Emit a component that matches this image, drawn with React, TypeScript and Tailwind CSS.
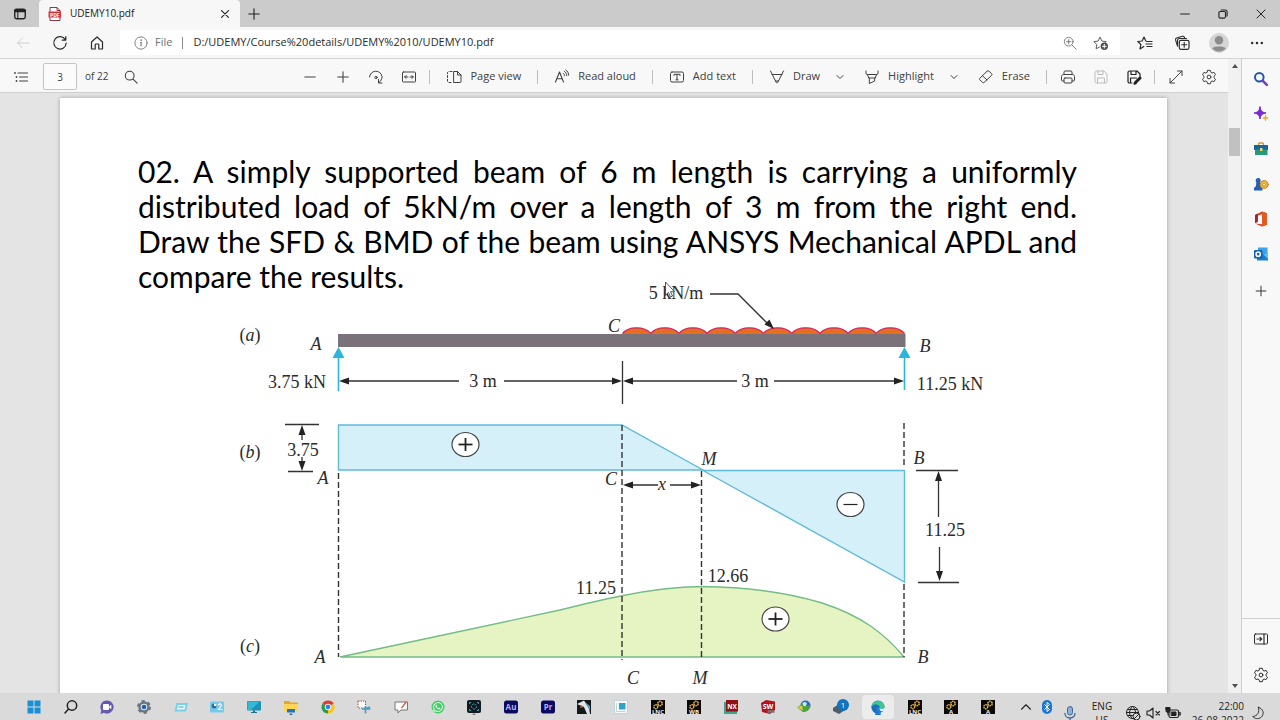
import React from 'react';
import { FaWhatsapp } from 'react-icons/fa';

interface IconProps {
  className?: string;
  children: React.ReactNode;
}

const Icon: React.FC<IconProps> = ({ className = 'size-4', children }) => (
  <svg
    viewBox="0 0 16 16"
    fill="none"
    stroke="currentColor"
    strokeLinecap="round"
    strokeLinejoin="round"
    className={`shrink-0 ${className}`}
    aria-hidden="true"
  >
    {children}
  </svg>
);

const GearIcon = () => (
  <Icon>
    <path d="M6.6 1.3h2.8l.5 2 1.2.7 2-.6 1.4 2.4-1.5 1.4v1.6l1.5 1.4-1.4 2.4-2-.6-1.2.7-.5 2H6.6l-.5-2-1.2-.7-2 .6-1.4-2.4L3 8.8V7.2L1.500 5.800l1.400-2.400 2 .6 1.200-.7z" />
    <circle cx="8" cy="8" r="1.9" />
  </Icon>
);

const ChevronDown = () => (
  <Icon className="size-2">
    <path d="M2 5l6 6 6-6" strokeWidth="2" />
  </Icon>
);

interface IconButtonProps {
  label: string;
  className?: string;
  children: React.ReactNode;
}

const IconButton: React.FC<IconButtonProps> = ({ label, className = 'w-[33px]', children }) => (
  <button type="button" aria-label={label} className={`flex h-full shrink-0 items-center justify-center ${className}`}>
    {children}
  </button>
);

const ToolButton: React.FC<{ label: string; icon: React.ReactNode; menu?: boolean }> = ({ label, icon, menu }) => (
  <button type="button" className={`flex h-full shrink-0 items-center gap-2 pl-3 ${menu ? 'pr-2' : 'pr-3'}`}>
    {icon}
    <span>{label}</span>
    {menu && (
      <span className="pl-2">
        <ChevronDown />
      </span>
    )}
  </button>
);

const Separator = () => <span className="mx-1 h-3.5 w-px shrink-0 bg-[#bdbdbd]" />;

const TabStrip = () => (
  <div className="flex h-[27px] shrink-0 bg-[#cbcbcb] text-[#222]">
    <IconButton label="Tab actions" className="w-[39px]">
      <Icon className="size-3.5">
        <rect x="2" y="2.5" width="12" height="11" rx="2" strokeWidth="1.6" />
        <path d="M2.5 4.5h11" strokeWidth="3" />
        <path d="M5.5 4v9" strokeWidth="1.2" />
      </Icon>
    </IconButton>
    <div className="flex w-[201px] items-center rounded-t bg-[#f7f7f7] pl-2">
      <svg viewBox="0 0 16 16" className="size-4 shrink-0" aria-hidden="true">
        <path d="M3 1.5h7l3 3V14.5H3z" fill="#fff" stroke="#8d3a44" />
        <path d="M10 1.5v3h3" fill="none" stroke="#8d3a44" />
        <rect x="1.5" y="5.5" width="12.5" height="6" fill="#d8303f" />
        <text x="7.8" y="10.5" fontSize="5" fontWeight="700" textAnchor="middle" fill="#fff">PDF</text>
      </svg>
      <span className="flex-1 pl-[7px] text-[10px]">UDEMY10.pdf</span>
      <button type="button" aria-label="Close tab" className="flex w-[30px] items-center justify-center">
        <Icon className="size-2.5">
          <path d="M2.5 2.5l11 11m0-11l-11 11" strokeWidth="1.8" />
        </Icon>
      </button>
    </div>
    <IconButton label="New tab" className="w-[28px]">
      <Icon className="size-3">
        <path d="M8 1v14M1 8h14" strokeWidth="1.5" />
      </Icon>
    </IconButton>
    <div className="ml-auto flex">
      <IconButton label="Minimise" className="w-[38px]">
        <Icon className="size-2.5">
          <path d="M1 8h14" strokeWidth="1.6" />
        </Icon>
      </IconButton>
      <IconButton label="Restore" className="w-[38px]">
        <Icon className="size-2.5">
          <rect x="1.5" y="4" width="10.5" height="10.5" rx="2" strokeWidth="1.8" />
          <path d="M5 1.5h6.5a3 3 0 013 3V11" strokeWidth="1.8" />
        </Icon>
      </IconButton>
      <IconButton label="Close" className="w-[38px]">
        <Icon className="size-2.5">
          <path d="M1.5 1.5l13 13m0-13l-13 13" strokeWidth="1.6" />
        </Icon>
      </IconButton>
    </div>
  </div>
);

const AddressBar = () => (
  <div className="flex h-8 shrink-0 items-center border-b border-[#d4d4d4] bg-[#f7f7f7] pl-1 text-[#2b2b2b]">
    <IconButton label="Back" className="w-[37px] text-[#cfcfcf]">
      <Icon>
        <path d="M14 8H2.500m5-5l-5 5 5 5" />
      </Icon>
    </IconButton>
    <IconButton label="Refresh" className="w-[37px]">
      <Icon>
        <path d="M13.300 4.600A6.200 6.200 0 1014.200 8M13.800 1.500v3.600h-3.600" strokeWidth="1.2" />
      </Icon>
    </IconButton>
    <IconButton label="Home" className="w-[37px]">
      <Icon>
        <path d="M2.500 7L8 2l5.500 5v7h-3.700V9.800c0-.5-.3-.8-.8-.8H7c-.5 0-.8.300-.8.800V14H2.500z" strokeWidth="1.2" />
      </Icon>
    </IconButton>
    <div className="ml-[5px] flex h-[25px] min-w-0 flex-1 items-center bg-white pr-1 pl-3.5 text-[11px]">
      <Icon className="size-3.5 text-[#707070]">
        <circle cx="8" cy="8" r="7" />
        <path d="M8 7.200v4" strokeWidth="1.3" />
        <circle cx="8" cy="4.700" r=".4" />
      </Icon>
      <span className="pl-[7px] text-[#707070]">File</span>
      <span className="mx-2.5 h-3 w-px bg-[#8a8a8a]" />
      <input
        aria-label="Address"
        defaultValue="D:/UDEMY/Course%20details/UDEMY%2010/UDEMY10.pdf"
        className="min-w-0 flex-1 bg-transparent text-[#2b2b2b] outline-none"
      />
      <button type="button" aria-label="Zoom" className="flex w-[31px] justify-center text-[#707070]">
        <Icon className="size-3.5">
          <circle cx="6.5" cy="6.5" r="5" />
          <path d="M10.300 10.300L15 15M6.500 4v5M4 6.500h5" />
        </Icon>
      </button>
      <button type="button" aria-label="Add to favourites" className="flex w-[31px] justify-center text-[#606060]">
        <Icon>
          <path d="M6.500 12l-3.400 1.900.8-4.300L.8 6.600l4.300-.5L7 2l1.900 4.100 4.300.500-1 1" />
          <circle cx="11.300" cy="11.300" r="3.700" fill="#505050" stroke="none" />
          <path d="M11.300 9.500v3.600m-1.800-1.800h3.600" stroke="#fff" />
        </Icon>
      </button>
    </div>
    <div className="flex h-full pr-[3px] pl-1.5">
      <IconButton label="Favourites" className="w-[37px]">
        <Icon>
          <path d="M6.800 11.500L3 13.900l.900-4.400L.8 6.500l4.300-.5L7 2l1.700 3.800M9.500 6.500H15M9 9h6M10 11.500h5" strokeWidth="1.2" />
        </Icon>
      </IconButton>
      <IconButton label="Collections" className="w-[37px]">
        <Icon>
          <rect x="5.300" y="5.300" width="9.700" height="9" rx="1.5" strokeWidth="1.2" />
          <path d="M10.200 7.300v5M7.700 9.800h5M3.500 11.200L1.600 5.200c-.3-1 .1-1.800 1-2.100l5.700-1.800c1-.3 1.700.1 2.100 1l.3.900M3.500 10.500V5.500c0-1.300.7-2 2-2h7" strokeWidth="1.1" />
        </Icon>
      </IconButton>
      <IconButton label="Profile" className="w-[37px]">
        <svg viewBox="0 0 20 20" className="size-5" aria-hidden="true">
          <circle cx="10" cy="10" r="10" fill="#d5d5d5" />
          <circle cx="10" cy="7.300" r="4.200" fill="#8c8c8c" />
          <path d="M3.300 15.300C4.500 12.800 15.500 12.800 16.700 15.300A8.500 8.500 0 013.300 15.300z" fill="#8c8c8c" />
        </svg>
      </IconButton>
      <IconButton label="Settings and more" className="w-[40px]">
        <Icon className="size-3.5">
          <g fill="currentColor" stroke="none">
            <circle cx="2.5" cy="8" r="1.4" />
            <circle cx="8" cy="8" r="1.4" />
            <circle cx="13.5" cy="8" r="1.4" />
          </g>
        </Icon>
      </IconButton>
    </div>
  </div>
);

const PdfToolbar = () => (
  <div className="flex h-[34px] shrink-0 items-center border-b border-[#cfcfcf] bg-[#f8f8f8] pt-0.5 text-[11px] text-[#404040]">
    <div className="mr-auto flex h-full items-center pl-1">
      <IconButton label="Contents">
        <Icon>
          <path d="M5 4h9.500M6.500 8h8M6.500 12h8" strokeWidth="1.2" />
          <g fill="currentColor" stroke="none">
            <circle cx="2" cy="4" r=".9" />
            <circle cx="3.500" cy="8" r=".9" />
            <circle cx="3.500" cy="12" r=".9" />
          </g>
        </Icon>
      </IconButton>
      <input
        aria-label="Page number"
        defaultValue="3"
        className="ml-1.5 h-[27px] w-[34px] rounded-xs border border-[#c4c4c4] bg-[#fbfbfb] text-center text-[10px] outline-none"
      />
      <span className="w-[29px] pl-2 text-[10px] whitespace-nowrap">of 22</span>
      <IconButton label="Find" className="ml-2 w-[33px]">
        <Icon className="size-3.5">
          <circle cx="6.5" cy="6.5" r="5" strokeWidth="1.2" />
          <path d="M10.300 10.300L15 15" strokeWidth="1.2" />
        </Icon>
      </IconButton>
    </div>
    <div className="flex h-full items-center">
      <IconButton label="Zoom out">
        <Icon className="size-3.5">
          <path d="M2 8h12" strokeWidth="1.2" />
        </Icon>
      </IconButton>
      <IconButton label="Zoom in">
        <Icon className="size-3.5">
          <path d="M8 2v12M2 8h12" strokeWidth="1.2" />
        </Icon>
      </IconButton>
      <IconButton label="Rotate">
        <Icon>
          <path d="M1.500 8A6.300 6.300 0 0114 7.500c0 2.600-1 4.500-3 6M10.500 10.500v3.500h3.500" />
          <circle cx="8" cy="8.500" r="1.200" />
        </Icon>
      </IconButton>
      <IconButton label="Fit to width">
        <Icon>
          <rect x="1.500" y="3" width="13" height="10" rx="1" />
          <path d="M7 8H3.700m1.500-1.500L3.700 8l1.500 1.500M9 8h3.300m-1.500-1.500L12.300 8l-1.500 1.500" />
        </Icon>
      </IconButton>
      <Separator />
      <ToolButton
        label="Page view"
        icon={
          <Icon>
            <path d="M8 2.500h3.500L15 6v6.500c0 .6-.4 1-1 1H8zM11.500 2.500V6H15" />
            <path d="M6 2.500H3c-1 0-1.500.5-1.500 1.500v8c0 1 .5 1.500 1.500 1.500h3" strokeDasharray="2 1.8" />
          </Icon>
        }
      />
      <Separator />
      <ToolButton
        label="Read aloud"
        icon={
          <Icon>
            <path d="M1.500 13L5.500 3l4 10M3 9.800h5" strokeWidth="1.1" />
            <path d="M9.500 4.500c.8.500 1.200 1.300 1.200 2.300M10.500 2.500c1.500.9 2.300 2.300 2.300 4M11.800 1c1.900 1.200 2.900 3 2.900 5.200" />
          </Icon>
        }
      />
      <Separator />
      <ToolButton
        label="Add text"
        icon={
          <Icon>
            <rect x="1.500" y="3" width="13" height="10" rx="1.500" />
            <path d="M5 6.500V5.300h6v1.200M8 5.300v5.500M7 10.800h2" />
          </Icon>
        }
      />
      <Separator />
      <ToolButton
        menu
        label="Draw"
        icon={
          <Icon>
            <path d="M1.500 2l5.800 11.500c.3.500 1.100.5 1.400 0L14.500 2M3 5.500h10M6.500 12h3" />
          </Icon>
        }
      />
      <ToolButton
        menu
        label="Highlight"
        icon={
          <Icon>
            <path d="M2 2v2.500c0 .5.400 1 1 1h10c.6 0 1-.5 1-1V2M3.500 5.500l1.200 3.500h6.600l1.200-3.500M5.300 9v5.500l5.400-2.500V9" />
          </Icon>
        }
      />
      <ToolButton
        label="Erase"
        icon={
          <Icon>
            <path d="M9 2.300L1.800 9.200c-.5.500-.5 1.100 0 1.600L4.500 13.500c.4.400 1 .4 1.500 0L13.700 6.300c.5-.5.5-1.100 0-1.600L11 2.200c-.6-.5-1.400-.5-2 .1zM4.500 6.800l4.500 4.200" />
          </Icon>
        }
      />
    </div>
    <div className="flex h-full items-center pr-[3px]">
      <Separator />
      <IconButton label="Print">
        <Icon>
          <path d="M4 5.500V3c0-.5.400-1 1-1h6c.6 0 1 .500 1 1v2.500M4 12H2.500c-.6 0-1-.4-1-1V7.500c0-1 .8-2 2-2h9c1.200 0 2 1 2 2V11c0 .6-.4 1-1 1H12" />
          <rect x="4" y="9" width="8" height="5" rx="1" />
        </Icon>
      </IconButton>
      <IconButton label="Save" className="w-[33px] text-[#bdbdbd]">
        <Icon>
          <path d="M2 3.500C2 2.700 2.700 2 3.500 2H11l3 3v7.500c0 .8-.7 1.500-1.500 1.500h-9C2.700 14 2 13.300 2 12.500zM5 2v3.500h5V2M4.500 14V9h7v5" />
        </Icon>
      </IconButton>
      <IconButton label="Save as" className="w-[33px] text-[#202020]">
        <Icon>
          <path d="M6 14H3.500C2.700 14 2 13.300 2 12.500v-9C2 2.700 2.700 2 3.500 2H11l3 3v2.500M5 2v3.500h5V2M4.500 14V9h6" strokeWidth="1.2" />
          <path d="M9.500 13.500l4.500-4.500" strokeWidth="3" />
          <path d="M8 15l.5-2 1.500 1.500z" fill="currentColor" />
        </Icon>
      </IconButton>
      <Separator />
      <IconButton label="Full screen">
        <Icon>
          <path d="M2 14L14 2M9.500 2H14v4.500M2 9.500V14h4.500" />
        </Icon>
      </IconButton>
      <IconButton label="Settings">
        <GearIcon />
      </IconButton>
    </div>
  </div>
);

/* points to the right with its tip on the origin */
const Head: React.FC<{ x: number; y: number; angle?: number; fill?: string }> = ({ x, y, angle = 0, fill = '#222' }) => (
  <path d="M0 0L-10 -3.500V3.500z" transform={`translate(${x} ${y}) rotate(${angle})`} fill={fill} />
);

const Sign: React.FC<{ x: number; y: number; minus?: boolean }> = ({ x, y, minus }) => (
  <g stroke="#222" fill="none">
    <ellipse cx={x} cy={y} rx="13.5" ry="12" fill="#fff" stroke="#444" strokeWidth="1.2" />
    <path d={`M${x - 7} ${y}h14`} strokeWidth={minus ? 1.2 : 1.8} />
    {!minus && <path d={`M${x} ${y - 6.5}v13`} strokeWidth="1.8" />}
  </g>
);

interface DiagramLabel {
  x: number;
  y: number;
  text: string;
  italic?: boolean;
}

const parts: DiagramLabel[] = [
  { x: 250, y: 341, text: 'a' },
  { x: 250, y: 458, text: 'b' },
  { x: 250, y: 652, text: 'c' },
];

const labels: DiagramLabel[] = [
  { x: 316, y: 350, text: 'A', italic: true },
  { x: 614, y: 332, text: 'C', italic: true },
  { x: 925, y: 352, text: 'B', italic: true },
  { x: 323, y: 484, text: 'A', italic: true },
  { x: 611, y: 485, text: 'C', italic: true },
  { x: 709, y: 465, text: 'M', italic: true },
  { x: 919, y: 464, text: 'B', italic: true },
  { x: 662, y: 490, text: 'x', italic: true },
  { x: 320, y: 663, text: 'A', italic: true },
  { x: 633, y: 684, text: 'C', italic: true },
  { x: 700, y: 684, text: 'M', italic: true },
  { x: 923, y: 663, text: 'B', italic: true },
  { x: 676, y: 299, text: '5 kN/m' },
  { x: 297, y: 388, text: '3.75 kN' },
  { x: 483, y: 387, text: '3 m' },
  { x: 755, y: 387, text: '3 m' },
  { x: 950, y: 390, text: '11.25 kN' },
  { x: 303, y: 456, text: '3.75' },
  { x: 945, y: 536, text: '11.25' },
  { x: 596, y: 594, text: '11.25' },
  { x: 728, y: 582, text: '12.66' },
];

const lobes = Array.from({ length: 10 }, (_, i) => 622.5 + i * 28.2);

const BeamDiagram = () => (
  <svg
    viewBox="60 282 1107 420"
    className="-mt-3 block w-full font-['Liberation_Serif',serif]"
    role="img"
    aria-label="Beam loading, shear force and bending moment diagrams"
  >
    {/* bending moment */}
    <path
      d="M340 657L560 610Q600 600 622 595.700Q665 587 702 586.500C745 587 785 592 822 603C862 616 885 634 904 657z"
      fill="#e6f4c3"
      stroke="#74bb86"
      strokeWidth="1.4"
    />
    {/* shear force */}
    <g fill="#d5f0f9" stroke="#5fbbd8" strokeWidth="1.4">
      <path d="M338.500 425H622L703 470H338.500z" />
      <path d="M703 470.500H904.500V582z" />
    </g>
    {/* beam and distributed load */}
    {lobes.map((x) => (
      <g key={x}>
        <path d={`M${x} 335V333C${x + 6} 326 ${x + 22} 326 ${x + 28.2} 333V335z`} fill="#e4701f" />
        <path d={`M${x} 333.500C${x + 6} 326 ${x + 22} 326 ${x + 28.2} 333.500`} fill="none" stroke="#d42a68" strokeWidth="1.4" />
      </g>
    ))}
    <rect x="338" y="334" width="567.500" height="13" fill="#7a717a" />
    <g stroke="#29b5dc" strokeWidth="1.6">
      <path d="M338.500 355V391M904.500 355V390" />
      <path d="M338.500 347l-6 11h12zM904.500 347l-6 11h12z" fill="#29b5dc" stroke="none" />
    </g>
    <g stroke="#333" strokeWidth="1.3" fill="none">
      <path d="M342 381H459M504 381H619M626 381H737M774 381H901" />
      <path d="M622.500 361V404" />
      <path d="M710 294H738L770 326" />
      <path d="M285 424.500H319M288 471.500H313M302 428V440M302 457V468" />
      <path d="M916 470.500H958M918 582.500H959M938.500 474V517M939.500 547V578" />
      <path d="M626 485H658M670 485H698" />
    </g>
    <g stroke="#333" strokeWidth="1.4" strokeDasharray="6 3">
      <path d="M338.500 473V657M622 425V660M701.500 471V658M904 423V468M904 584V657" />
    </g>
    <Head x={339} y={381} angle={180} />
    <Head x={622} y={381} />
    <Head x={623} y={381} angle={180} />
    <Head x={904} y={381} />
    <Head x={774} y={329} angle={45} />
    <Head x={302} y={425} angle={-90} />
    <Head x={302} y={471} angle={90} />
    <Head x={938.5} y={471} angle={-90} />
    <Head x={939.5} y={581} angle={90} />
    <Head x={623} y={485} angle={180} />
    <Head x={701} y={485} />
    <Sign x={465.5} y={444.5} />
    <Sign x={850.5} y={504.5} minus />
    <Sign x={775.5} y={619} />
    {parts.map(({ x, y, text }) => (
      <text key={text} x={x} y={y} textAnchor="middle" fontSize="18" fill="#2b2b2b">
        (<tspan fontStyle="italic">{text}</tspan>)
      </text>
    ))}
    {labels.map(({ x, y, text, italic }) => (
      <text key={`${x}-${y}`} x={x} y={y} textAnchor="middle" fontSize="18" fontStyle={italic ? 'italic' : 'normal'} fill="#2b2b2b">
        {text}
      </text>
    ))}
    <path d="M665.500 282v13l3-2.500 2 4.500 2-1-2-4.300h4z" fill="#fff" stroke="#444" strokeWidth=".9" />
  </svg>
);

const Scrollbar = () => (
  <div className="flex w-[13px] shrink-0 flex-col items-center bg-[#f1f1f1] py-1" aria-hidden="true">
    <svg viewBox="0 0 8 6" className="h-1.5 w-2">
      <path d="M4 1l3 4H1z" fill="#505050" />
    </svg>
    <div className="mt-[59px] h-7 w-[11px] bg-[#c1c1c1]" />
    <svg viewBox="0 0 8 6" className="mt-auto h-1.5 w-2">
      <path d="M4 5l3-4H1z" fill="#505050" />
    </svg>
  </div>
);

const Sidebar = () => (
  <aside className="flex w-[39px] shrink-0 flex-col border-l border-[#cfcfcf] bg-[#f8f8f8] pt-0.5 text-[#303030]">
    <button type="button" aria-label="Search" className="flex h-[35px] items-center justify-center">
      <Icon>
        <circle cx="6.300" cy="6.300" r="4.300" stroke="#2457b5" strokeWidth="2" />
        <path d="M9.800 9.800l4 4" stroke="#6b3fc0" strokeWidth="2.6" />
      </Icon>
    </button>
    <button type="button" aria-label="Discover" className="flex h-[35px] items-center justify-center">
      <Icon>
        <path d="M7 1c.8 4 2 5.200 6 6-4 .8-5.200 2-6 6-.8-4-2-5.200-6-6 4-.8 5.200-2 6-6z" fill="#7a2bd6" stroke="#6a25c8" />
        <path d="M12.500 9.500c.3 1.800.8 2.300 2.600 2.600-1.800.3-2.300.8-2.600 2.600-.3-1.800-.8-2.300-2.600-2.600 1.800-.3 2.300-.8 2.600-2.600z" fill="#e0b62c" stroke="#e0b62c" />
      </Icon>
    </button>
    <button type="button" aria-label="Tools" className="flex h-[35px] items-center justify-center">
      <Icon>
        <path d="M5.500 4V3c0-.6.400-1 1-1h3c.6 0 1 .4 1 1v1" stroke="#c89b2b" strokeWidth="1.3" />
        <path d="M1 4h14v5H1z" fill="#17649f" stroke="none" />
        <path d="M2 8.500h12.500V14H2z" fill="#28977a" stroke="none" />
        <rect x="7" y="7" width="2.500" height="3" fill="#eed66b" stroke="none" />
      </Icon>
    </button>
    <button type="button" aria-label="Games" className="flex h-[35px] items-center justify-center">
      <Icon>
        <path d="M5 2a2.500 2.500 0 012 4.200L7.500 10l2 2v2.500H1V12l2-2 .3-3.800A2.500 2.500 0 015 2z" fill="#235fb4" stroke="none" />
        <circle cx="11.200" cy="8.500" r="4" fill="#e9b645" stroke="#c98b22" />
        <path d="M9.700 8.500l1.500-1.500 1.500 1.500-1.500 1.500z" fill="#fff2b8" stroke="#b87918" strokeWidth=".6" />
      </Icon>
    </button>
    <button type="button" aria-label="Office" className="flex h-[35px] items-center justify-center">
      <Icon>
        <path d="M2 4l7-3.500 5 1.700v11.600l-5 1.700-7-3 7 .8V3.300L4.800 4.600v6.200L2 12z" fill="#d3401f" stroke="none" />
        <path d="M9 .5l5 1.700v11.600l-5 1.700z" fill="#e25a20" stroke="none" />
        <path d="M2 4l2.800-1.400v8.200L2 12z" fill="#a91f35" stroke="none" />
      </Icon>
    </button>
    <button type="button" aria-label="Outlook" className="flex h-[35px] items-center justify-center">
      <Icon>
        <rect x="5" y="1.500" width="9.500" height="9" fill="#3aa5e2" stroke="none" />
        <path d="M4 8l11-1v7.500H4z" fill="#1c7fcd" stroke="none" />
        <path d="M10 8l5 5V7z" fill="#59c4f0" stroke="none" />
        <rect x="1" y="4" width="8.500" height="8.500" rx="1" fill="#0f64b5" stroke="none" />
        <circle cx="5.200" cy="8.200" r="2.100" stroke="#fff" strokeWidth="1.5" />
      </Icon>
    </button>
    <button type="button" aria-label="Add" className="flex h-10 items-center justify-center">
      <Icon className="size-3">
        <path d="M8 1.500v13M1.500 8h13" strokeWidth="1.3" />
      </Icon>
    </button>
    <div className="mt-auto flex flex-col border-t border-[#cfcfcf] pt-0.5">
      <button type="button" aria-label="Hide sidebar" className="flex h-9 items-center justify-center">
        <Icon>
          <rect x="1.500" y="3" width="13" height="10" rx="1" />
          <path d="M11 3v10M4 8h4.500M7 6.300L8.700 8 7 9.700" strokeWidth="1.2" />
        </Icon>
      </button>
      <button type="button" aria-label="Sidebar settings" className="flex h-9 items-center justify-center">
        <GearIcon />
      </button>
    </div>
  </aside>
);

const AnsysIcon: React.FC<{ text: string }> = ({ text }) => (
  <>
    <rect x="1" y="1" width="14" height="14" fill="#0a0a0a" />
    <circle cx="10" cy="4.500" r="2.200" fill="none" stroke="#e2b04a" strokeWidth="1.5" strokeDasharray="1.6 .5" />
    <circle cx="5.800" cy="7.800" r="2" fill="none" stroke="#e2b04a" strokeWidth="1.4" strokeDasharray="1.500 .5" />
    <text x="8" y="15" fontSize="6" fontWeight="700" textAnchor="middle" fill="#eee">{text}</text>
  </>
);

const AdobeIcon: React.FC<{ text: string }> = ({ text }) => (
  <>
    <rect x="1" y="1.500" width="14" height="13" rx="2.500" fill="#0a0a5e" />
    <text x="8" y="10.800" fontSize="8" fontWeight="700" textAnchor="middle" fill="#b3b1ff">{text}</text>
  </>
);

const taskbarApps: { name: string; art: React.ReactNode }[] = [
  {
    name: 'Start',
    art: <path d="M1.500 1.500h6v6h-6zM8.500 1.500h6v6h-6zM1.500 8.500h6v6h-6zM8.500 8.500h6v6h-6z" fill="#1b8fd6" />,
  },
  {
    name: 'Search',
    art: (
      <g fill="none" stroke="#222" strokeWidth="1.5" strokeLinecap="round">
        <circle cx="9" cy="6.500" r="4.700" />
        <path d="M5.500 10L2 14" />
      </g>
    ),
  },
  {
    name: 'Chat',
    art: (
      <>
        <path d="M8 1.500a6.500 6.500 0 11-3 12.200L1.500 15l.8-3.700A6.500 6.500 0 018 1.500z" fill="#6557b3" />
        <rect x="4" y="5" width="6" height="6" rx="1" fill="#fff" />
        <path d="M10.300 7.300l2-1.500v4.500l-2-1.500z" fill="#fff" />
      </>
    ),
  },
  {
    name: 'Settings',
    art: (
      <>
        <circle cx="8" cy="8" r="5.700" fill="#6a7580" />
        <circle cx="8" cy="8" r="6" fill="none" stroke="#6a7580" strokeWidth="2" strokeDasharray="3.1 3.183" />
        <circle cx="8" cy="8" r="3.300" fill="#dce8f2" />
        <circle cx="8" cy="8" r="2.300" fill="#2364a0" />
      </>
    ),
  },
  {
    name: 'Run',
    art: (
      <>
        <path d="M3.500 4H15l-2 8.500H1.500z" fill="#79cfe6" />
        <path d="M5 6h7.500l-1 4.500H4z" fill="#e8fafd" />
        <path d="M5.500 8h5" stroke="#3ba4c6" />
      </>
    ),
  },
  {
    name: 'Control Panel',
    art: (
      <>
        <rect x="1" y="2.500" width="14" height="11" rx="1" fill="#7ac8e8" />
        <circle cx="5" cy="7" r="2.500" fill="#286fa8" />
        <path d="M5 7V4.500A2.500 2.500 0 017.500 7z" fill="#fff" />
        <path d="M9 6l2-1.500 1.500 2-3 4h4" fill="none" stroke="#f2fcff" strokeWidth="1.2" />
      </>
    ),
  },
  {
    name: 'This PC',
    art: (
      <>
        <rect x="1" y="2" width="14" height="9.500" rx="1" fill="#1a91b8" />
        <path d="M1.500 2.500h12L5 11H1.500z" fill="#35b9d3" />
        <path d="M7 11.500h2V13h2v1H5v-1h2z" fill="#1a6f91" />
      </>
    ),
  },
  {
    name: 'File Explorer',
    art: (
      <>
        <path d="M1 2h5l1.500 1.500H15V12H1z" fill="#e4a92a" />
        <path d="M1 5h14v7.500H1z" fill="#ffd65a" />
        <path d="M4 10h8v3.500H4z" fill="#2176bd" />
        <rect x="6.500" y="14.500" width="3" height="1.500" rx=".7" fill="#4f6a85" />
      </>
    ),
  },
  {
    name: 'Chrome',
    art: (
      <>
        <path d="M8 8L2.400 4.700a6.500 6.500 0 0111.300 0z" fill="#df3b30" />
        <path d="M8 8l5.700-3.300A6.500 6.500 0 018 14.500z" fill="#fbc516" />
        <path d="M8 8v6.500A6.500 6.500 0 012.400 4.700z" fill="#2c9b4b" />
        <circle cx="8" cy="8" r="3.200" fill="#fff" />
        <circle cx="8" cy="8" r="2.400" fill="#3b7fe6" />
      </>
    ),
  },
  {
    name: 'Snipping Tool',
    art: (
      <g fill="none">
        <rect x="2" y="2" width="7.500" height="7" fill="#fff" stroke="#a04c42" strokeDasharray="1.5 1" />
        <path d="M9.500 14.500V7M6 10h8.500M10 9.500L14 8" stroke="#4a9cc0" strokeWidth="1.6" />
      </g>
    ),
  },
  {
    name: 'Whiteboard',
    art: (
      <>
        <path d="M2 3h12.500v8H8l-3 3v-3H2z" fill="#fafafa" stroke="#777" />
        <path d="M8.500 9l5-6.500" stroke="#d6683d" strokeWidth="1.3" />
      </>
    ),
  },
  {
    name: 'WhatsApp',
    art: (
      <>
        <circle cx="8" cy="8" r="6.500" fill="#3fd163" />
        <FaWhatsapp x={2.5} y={2.5} size={11} color="#fff" />
      </>
    ),
  },
  {
    name: 'Screen Recorder',
    art: (
      <>
        <rect x="1" y="1" width="14" height="13" rx="2" fill="#101a20" />
        <g fill="none" stroke="#42a9bd">
          <circle cx="8" cy="7.500" r="2.500" strokeDasharray="2 1" />
          <path d="M3.500 5V3.500H5M11 3.500h1.500V5M12.500 10v1.500H11M5 11.500H3.500V10" />
        </g>
        <rect x="6.500" y="14.500" width="3" height="1.500" rx=".7" fill="#777" />
      </>
    ),
  },
  { name: 'Audition', art: <AdobeIcon text="Au" /> },
  { name: 'Premiere Pro', art: <AdobeIcon text="Pr" /> },
  {
    name: 'Photo Editor',
    art: (
      <>
        <rect x="1" y="1" width="14" height="14" fill="#15181b" />
        <path d="M1 5l7-3.500L13 9l1 6h-3L8 8z" fill="#dfe7ea" />
        <path d="M9 3l5 4v5z" fill="#3f9fc6" />
        <path d="M5 6l3 2-4 1z" fill="#b3603e" />
      </>
    ),
  },
  {
    name: 'Notes',
    art: (
      <>
        <rect x="1.500" y="1.500" width="13" height="13" fill="#f6fafc" stroke="#c3d3da" />
        <rect x="6" y="4" width="6.500" height="6.500" fill="#2fa1cc" />
        <path d="M3.500 4v8.500h9" fill="none" stroke="#b8d9e6" />
      </>
    ),
  },
  { name: 'Licensing', art: <AnsysIcon text="LNC" /> },
  { name: 'Workbench', art: <AnsysIcon text="WB" /> },
  {
    name: 'NX',
    art: (
      <>
        <path d="M1 3h3v9h10v3H1z" fill="#3ca48d" />
        <rect x="3" y="1" width="12" height="11.500" fill="#8f1018" />
        <text x="9" y="9.500" fontSize="6.500" fontWeight="700" textAnchor="middle" fill="#fff">NX</text>
      </>
    ),
  },
  {
    name: 'SolidWorks',
    art: (
      <>
        <path d="M1 4l5-3 9 1.500V11l-5 4-8-2z" fill="#b3131c" />
        <text x="8" y="10" fontSize="7" fontWeight="700" textAnchor="middle" fill="#fff">SW</text>
        <path d="M7.500 12.500h7" stroke="#777" strokeWidth="2.5" />
      </>
    ),
  },
  {
    name: 'Download Manager',
    art: (
      <>
        <circle cx="9.500" cy="6.500" r="5" fill="#2f67b5" />
        <path d="M6 5c2-3 4-2 5-.5L9 9z" fill="#cfe3f2" />
        <path d="M1 8.500l6-4v2.500c3 .5 5 0 7.500-1.500-.5 5-3 7.500-7.500 7.500z" fill="#49a63e" />
        <path d="M1 8.500l5-2 1 5z" fill="#e6ca38" />
      </>
    ),
  },
  {
    name: 'Notifications',
    art: (
      <>
        <path d="M0 9l6-4 6 2v4l-6 4-6-3z" fill="#505c66" />
        <circle cx="10" cy="6" r="6" fill="#1173bd" />
        <text x="10" y="9" fontSize="8" textAnchor="middle" fill="#fff">1</text>
      </>
    ),
  },
  {
    name: 'Edge',
    art: (
      <>
        <circle cx="8" cy="8" r="6.500" fill="#1a85d1" />
        <path d="M1.500 8C2 0 14 0 14.500 7.500c0 3-4.500 3-5 1.500C10 6 5 4 1.500 8z" fill="#42c58c" />
        <path d="M1.500 8C4 4 10 5 9.500 9c-.5-1.500-3-1-3 1 0 1.500 1 3.500 3 4.300C5 15.500 1.500 12 1.500 8z" fill="#1c6fc0" />
        <path d="M9.500 9c1 1.500 4 1.300 5-.5 0 1.500-.5 2.500-1.500 3.500-1.500.5-3.500 0-3.500-3z" fill="#e5eef4" />
        <rect x="5" y="14.200" width="6" height="1.800" rx=".9" fill="#1b72c0" />
      </>
    ),
  },
  { name: 'Licensing Manager', art: <AnsysIcon text="LNC" /> },
  { name: 'Mechanical APDL', art: <AnsysIcon text="A" /> },
  { name: 'Mechanical APDL output', art: <AnsysIcon text="A" /> },
];

const Taskbar = () => (
  <footer className="flex h-[27px] shrink-0 items-start overflow-hidden bg-[#dadada] text-[#222]">
    <nav aria-label="Apps" className="flex min-w-0 flex-1 justify-between pt-0.5 pl-[18px]">
      {taskbarApps.map(({ name, art }) => (
        <button
          key={name}
          type="button"
          aria-label={name}
          className={`flex h-6 w-8 items-center justify-center rounded-sm ${name === 'Edge' ? 'bg-[#ececec]' : ''}`}
        >
          <svg viewBox="0 0 16 16" className="size-4" aria-hidden="true">
            {art}
          </svg>
        </button>
      ))}
    </nav>
    <div className="flex w-[276px] shrink-0 items-start pt-1.5 pl-3 text-[10px] leading-[14px]">
      <button type="button" aria-label="Show hidden icons" className="flex h-4 w-5 items-center justify-center">
        <Icon className="size-3">
          <path d="M2 11l6-6 6 6" strokeWidth="1.5" />
        </Icon>
      </button>
      <button type="button" aria-label="Bluetooth" className="ml-[3px] flex h-4 w-4 items-center justify-center">
        <svg viewBox="0 0 16 16" className="size-4" aria-hidden="true">
          <rect x="3" y="1" width="10" height="14" rx="5" fill="#1976d2" />
          <path d="M5.500 5.500l5 5L8 12.500v-9l2.500 2-5 5" fill="none" stroke="#fff" />
        </svg>
      </button>
      <button type="button" aria-label="Microphone" className="mt-1.5 ml-[7px] flex h-4 w-4 items-center justify-center text-[#3d6699]">
        <Icon>
          <rect x="5.500" y="1.500" width="5" height="8.500" rx="2.500" fill="#8fb2d8" />
          <path d="M3 8.500a5 4.500 0 0010 0M8 13v2.500" strokeWidth="1.3" />
        </Icon>
      </button>
      <button type="button" className="ml-3 flex w-6 flex-col items-center">
        <span>ENG</span>
        <span>US</span>
      </button>
      <button type="button" aria-label="Network, sound and battery" className="mt-1.5 ml-[11px] flex h-4 items-center gap-1">
        <Icon>
          <circle cx="7.500" cy="7.500" r="6" />
          <path d="M1.500 7.500h12M7.500 1.500c-4 3.500-4 8.500 0 12M7.500 1.500c2 1.500 3 4 3 6M2.500 4.500h10M2.500 10.500h5" />
          <circle cx="11.500" cy="11.500" r="3.500" fill="#dadada" />
          <path d="M9 14l5-5" />
        </Icon>
        <Icon>
          <path d="M2 6h2.500L8 3v10l-3.500-3H2zM11 6.500l3.500 3.500m0-3.500L11 10" strokeWidth="1.1" />
        </Icon>
        <Icon>
          <path d="M1 2.500h4V6c0 1-1 1.500-2 1.500S1 7 1 6zM3 7.500V10" fill="currentColor" />
          <rect x="4" y="5" width="9.500" height="7.500" rx="1.500" strokeWidth="1.2" />
          <path d="M6.500 7h4.500v3.500H6.500z" fill="currentColor" />
          <path d="M15 7.500v2.500" strokeWidth="1.5" />
        </Icon>
      </button>
      <button type="button" className="ml-auto flex flex-col items-end">
        <span>22:00</span>
        <span>26-08-2022</span>
      </button>
      <button type="button" aria-label="Do not disturb" className="mt-1.5 mr-3.5 ml-1.5 flex h-4 w-4 items-center justify-center">
        <Icon className="size-3.5">
          <path d="M8.500 1.500c6 1.500 7 8 3 11.500-3.500 2.500-7.500 1.500-9.500-1 5.500-.5 8-4.500 6.500-10.500z" />
        </Icon>
      </button>
    </div>
  </footer>
);

export default function App() {
  return (
    <div className="flex h-screen flex-col overflow-hidden bg-[#f7f7f7] font-['Open_Sans','Noto_Sans',sans-serif]">
      <TabStrip />
      <AddressBar />
      <div className="flex min-h-0 flex-1">
        <div className="flex min-w-0 flex-1 flex-col">
          <PdfToolbar />
          <main className="min-h-0 flex-1 overflow-hidden bg-[#e4e4e4] pt-[5px] pr-[61px] pl-[60px]">
            <article className="bg-white pt-14 shadow-[0_0_4px_rgba(0,0,0,0.3)]">
              <p className="pr-[90px] pl-[78px] text-justify font-['Lato',sans-serif] text-[30px] leading-[35px] text-black">
                02. A simply supported beam of 6 m length is carrying a uniformly distributed load of 5kN/m over a
                length of 3 m from the right end. Draw the SFD &amp; BMD of the beam using ANSYS Mechanical APDL and
                compare the results.
              </p>
              <BeamDiagram />
            </article>
          </main>
        </div>
        <Scrollbar />
        <Sidebar />
      </div>
      <Taskbar />
    </div>
  );
}
